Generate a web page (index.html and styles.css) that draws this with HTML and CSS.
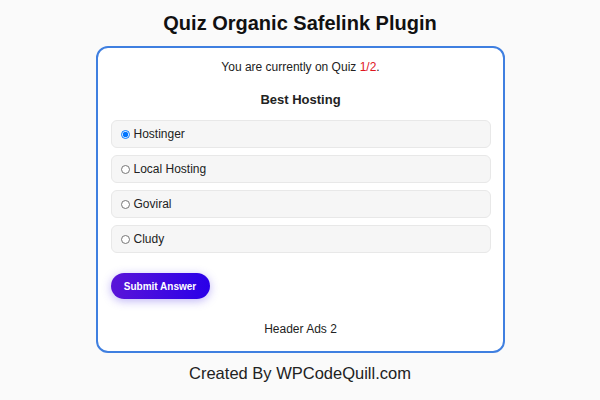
FILE: index.html
```html
<!DOCTYPE html>
<html lang="en">
<head>
  <meta charset="UTF-8" />
  <title>Quiz Organic Safelink Plugin</title>
  <link rel="stylesheet" href="styles.css">
</head>
<body>
  <h1>Quiz Organic Safelink Plugin</h1>

  <div class="quiz-card">
    <p class="progress">You are currently on Quiz <span class="count">1/2</span>.</p>
    <h2>Best Hosting</h2>

    <form id="quizForm">
      <label class="option"><input type="radio" name="answer" checked> Hostinger</label>
      <label class="option"><input type="radio" name="answer"> Local Hosting</label>
      <label class="option"><input type="radio" name="answer"> Goviral</label>
      <label class="option"><input type="radio" name="answer"> Cludy</label>
      <button type="submit">Submit Answer</button>
    </form>

    <p class="ads">Header Ads 2</p>
  </div>

  <p class="footer">Created By WPCodeQuill.com</p>
</body>
</html>
```

FILE: styles.css
```css
body {
  background-color: #fafafa;
  color: #222;
  font-family: 'Liberation Sans', Arial, sans-serif;
  margin: 0;
  padding: 0;
}

h1 {
  text-align: center;
  font-size: 20px;
  line-height: 24px;
  margin: 11px 0 11px;
  color: #111;
}

.quiz-card {
  width: 380px;
  margin: 0 auto;
  background: #fff;
  border: 2px solid #3f7fe0;
  border-radius: 12px;
  padding: 12px 12px 15px 13px;
}

.progress {
  text-align: center;
  font-size: 12px;
  line-height: 14px;
  margin: 0;
}

.count {
  color: #e0151f;
}

h2 {
  text-align: center;
  font-size: 13px;
  line-height: 16px;
  margin: 18px 0 12px;
}

form {
  display: flex;
  flex-direction: column;
  gap: 7px;
}

.option {
  display: flex;
  align-items: center;
  height: 26px;
  padding: 0 9px;
  background: #f6f6f6;
  border: 1px solid #e8e8e8;
  border-radius: 6px;
  font-size: 12px;
}

.option input {
  width: 9px;
  height: 9px;
  margin: 0 4px 0 0;
}

button {
  align-self: flex-start;
  margin-top: 13px;
  width: 99px;
  height: 26px;
  border: none;
  border-radius: 13px;
  background: linear-gradient(90deg, #5a14d8, #2a00e8);
  color: #fff;
  font-family: 'Liberation Sans', Arial, sans-serif;
  font-weight: bold;
  font-size: 10px;
  box-shadow: 0 2px 10px rgba(70, 40, 230, 0.35);
  cursor: pointer;
}

.ads {
  text-align: center;
  font-size: 12px;
  line-height: 14px;
  margin: 23px 0 0;
}

.footer {
  text-align: center;
  font-size: 16.5px;
  line-height: 22px;
  margin: 9px 0 0;
  color: #222;
}
```
